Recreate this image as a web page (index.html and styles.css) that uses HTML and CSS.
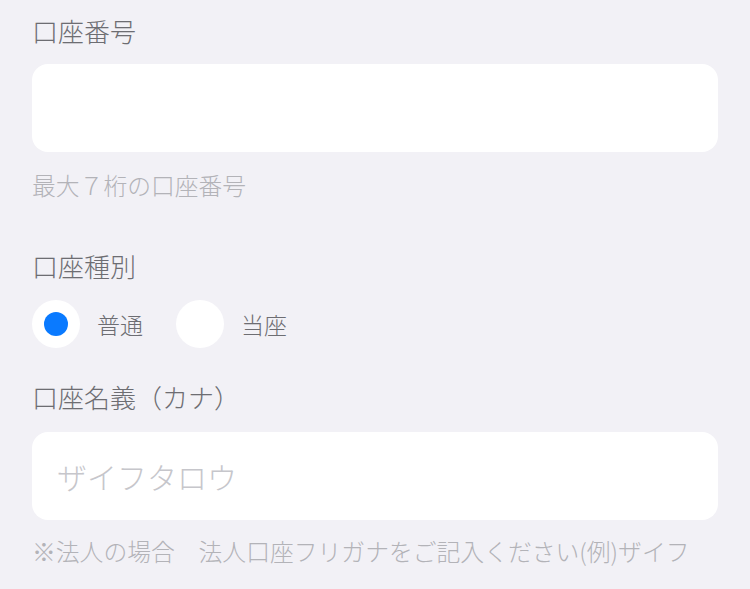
FILE: index.html
```html
<!DOCTYPE html>
<html lang="ja">
<head>
  <meta charset="UTF-8">
  <title>口座情報</title>
  <link rel="stylesheet" href="styles.css">
</head>
<body>
  <form class="bank-form">
    <div class="field">
      <label class="field-label" for="accountNumber">口座番号</label>
      <input class="field-input" type="text" id="accountNumber" name="accountNumber">
      <div class="field-hint">最大７桁の口座番号</div>
    </div>

    <div class="field field-type">
      <div class="field-label">口座種別</div>
      <div class="radio-row">
        <label class="radio-item">
          <span class="radio-circle checked"><span class="radio-dot"></span></span>
          <span class="radio-text">普通</span>
        </label>
        <label class="radio-item">
          <span class="radio-circle"></span>
          <span class="radio-text">当座</span>
        </label>
      </div>
    </div>

    <div class="field field-name">
      <label class="field-label" for="accountName">口座名義（カナ）</label>
      <input class="field-input" type="text" id="accountName" name="accountName" placeholder="ザイフタロウ">
      <div class="field-hint">※法人の場合　法人口座フリガナをご記入ください(例)ザイフ</div>
    </div>
  </form>
</body>
</html>
```

FILE: styles.css
```css
body {
  margin: 0;
  background: #f2f1f6;
  font-family: "Noto Sans CJK JP", "Noto Sans", sans-serif;
  font-weight: 300;
  color: #6d6d72;
}

.bank-form {
  padding: 16px 32px 0 32px;
}

.field-label {
  display: block;
  font-size: 26px;
  line-height: 30px;
}

.field-input {
  display: block;
  box-sizing: border-box;
  width: 100%;
  height: 88px;
  margin-top: 18px;
  padding: 0 25px;
  border: none;
  border-radius: 16px;
  background: #fff;
  font-family: inherit;
  font-weight: 300;
  font-size: 30px;
  color: #333;
  outline: none;
}

.field-input::placeholder {
  color: #c6c6cb;
}

.field-hint {
  margin-top: 18px;
  font-size: 23.8px;
  line-height: 30px;
  color: #b3b3b8;
  white-space: nowrap;
}

.field-type {
  margin-top: 51px;
}

.radio-row {
  display: flex;
  align-items: center;
  gap: 33px;
  margin-top: 19px;
}

.radio-item {
  display: flex;
  align-items: center;
  gap: 17px;
}

.radio-circle {
  display: flex;
  align-items: center;
  justify-content: center;
  width: 48px;
  height: 48px;
  border-radius: 50%;
  background: #fff;
}

.radio-dot {
  width: 24px;
  height: 24px;
  border-radius: 50%;
  background: #0a7aff;
}

.radio-text {
  font-size: 23px;
  line-height: 30px;
}

.field-name {
  margin-top: 34px;
}

.field-name .field-input {
  margin-top: 20px;
}

.field-name .field-hint {
  margin-top: 16px;
}
```
